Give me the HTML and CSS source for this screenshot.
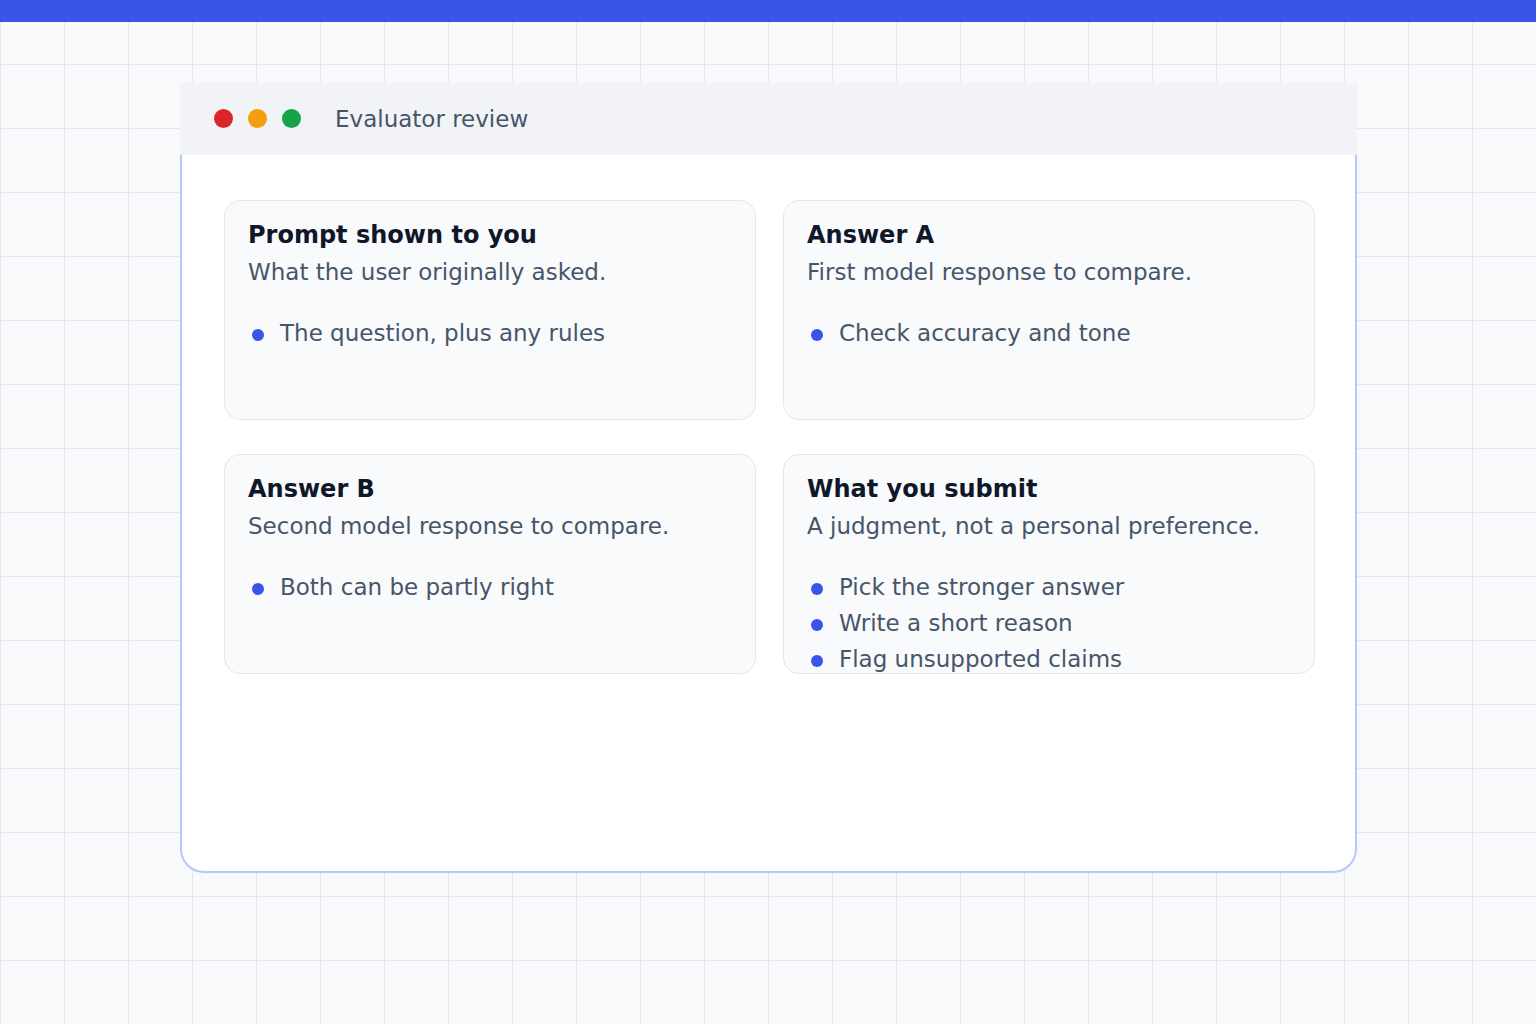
FILE: index.html
```html
<!DOCTYPE html>
<html lang="en">
<head>
  <meta charset="UTF-8" />
  <title>Evaluator review</title>
  <link rel="stylesheet" href="styles.css">
</head>
<body>

  <div class="topbar"></div>

  <div class="window">
    <div class="titlebar">
      <div class="dots">
        <span class="dot red"></span>
        <span class="dot amber"></span>
        <span class="dot green"></span>
      </div>
      <div class="window-title">Evaluator review</div>
    </div>

    <div class="panel">
      <div class="cards">
        <div class="card">
          <h3>Prompt shown to you</h3>
          <p>What the user originally asked.</p>
          <ul>
            <li>The question, plus any rules</li>
          </ul>
        </div>

        <div class="card">
          <h3>Answer A</h3>
          <p>First model response to compare.</p>
          <ul>
            <li>Check accuracy and tone</li>
          </ul>
        </div>

        <div class="card">
          <h3>Answer B</h3>
          <p>Second model response to compare.</p>
          <ul>
            <li>Both can be partly right</li>
          </ul>
        </div>

        <div class="card">
          <h3>What you submit</h3>
          <p>A judgment, not a personal preference.</p>
          <ul>
            <li>Pick the stronger answer</li>
            <li>Write a short reason</li>
            <li>Flag unsupported claims</li>
          </ul>
        </div>
      </div>
    </div>
  </div>

</body>
</html>
```

FILE: styles.css
```css
body {
  margin: 0;
  font-family: 'DejaVu Sans', Verdana, sans-serif;
  background-color: #f8f9fb;
  background-image:
    linear-gradient(to right, #e3e6ec 1px, transparent 1px),
    linear-gradient(to bottom, #e3e6ec 1px, transparent 1px);
  background-size: 64px 64px;
  min-height: 1024px;
}

.topbar {
  height: 22px;
  background-color: #3a53e9;
}

.window {
  width: 1177px;
  margin: 60px 0 0 180px;
}

.titlebar {
  height: 73px;
  background-color: #f1f3f7;
  display: flex;
  align-items: center;
  padding-left: 34px;
}

.dots {
  display: flex;
  gap: 15px;
}

.dot {
  width: 19px;
  height: 19px;
  border-radius: 50%;
}

.red { background-color: #dc2626; }
.amber { background-color: #f59e0b; }
.green { background-color: #16a34a; }

.window-title {
  margin-left: 34px;
  font-size: 23px;
  color: #475569;
}

.panel {
  box-sizing: border-box;
  height: 718px;
  background-color: white;
  border: 2px solid #b8c6fb;
  border-top: none;
  border-radius: 0 0 24px 24px;
  padding: 45px 0 0 42px;
}

.cards {
  display: grid;
  grid-template-columns: 532px 532px;
  grid-auto-rows: 220px;
  column-gap: 27px;
  row-gap: 34px;
}

.card {
  box-sizing: border-box;
  background-color: #f8fafc;
  border: 1px solid #e5e7eb;
  border-radius: 16px;
  padding: 20px 23px;
}

.card h3 {
  margin: 0;
  font-size: 24px;
  line-height: 28px;
  font-weight: bold;
  color: #0f172a;
}

.card p {
  margin: 9px 0 0;
  font-size: 23px;
  line-height: 28px;
  color: #475569;
}

.card ul {
  list-style: none;
  margin: 29px 0 0;
  padding: 0;
}

.card li {
  display: flex;
  align-items: center;
  height: 36px;
  font-size: 23px;
  color: #475569;
}

.card li::before {
  content: "";
  width: 12px;
  height: 12px;
  border-radius: 50%;
  background-color: #3a53e9;
  margin: 4px 16px 0 4px;
  flex-shrink: 0;
}
```
